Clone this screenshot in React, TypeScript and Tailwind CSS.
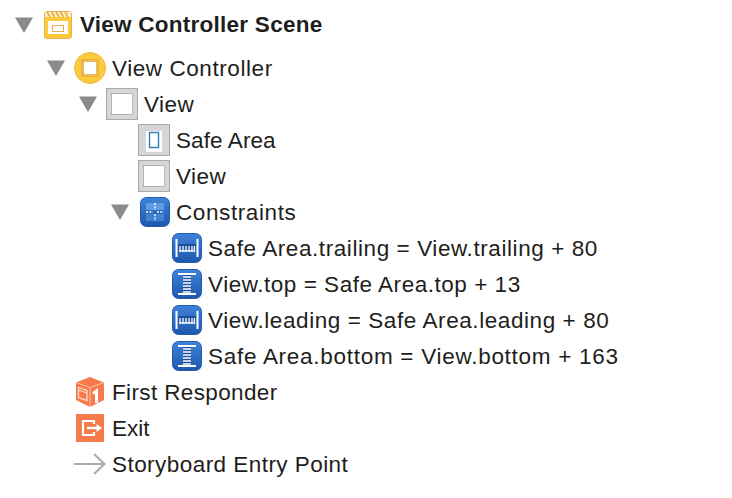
import React from "react";

const Tri = () => (
  <svg width="18" height="16" viewBox="0 0 18 16" className="-ml-px block">
    <path d="M0 0.5H18L9 16Z" fill="#8a8a8a" />
  </svg>
);

const SceneIcon = () => (
  <svg width="28" height="28" viewBox="0 0 28 28">
    <rect x="0.5" y="0.5" width="27" height="27" rx="2.5" fill="#fdca3c" stroke="#e8b04c" />
    <rect x="1" y="1" width="26" height="5" fill="#fdf0cc" />
    <path d="M3 1l3 5M7.500 1l3 5M12 1l3 5M16.500 1l3 5M21 1l3 5" stroke="#e8ad3c" strokeWidth="1.6" />
    <rect x="4" y="10" width="20" height="13" fill="#fff" />
    <rect x="8.500" y="14.500" width="11" height="6" fill="#fff" stroke="#e8b04c" />
  </svg>
);

const VCIcon = () => (
  <svg width="32" height="32" viewBox="0 0 32 32">
    <circle cx="16" cy="16" r="15.500" fill="#fdca3c" stroke="#f0b544" />
    <rect x="7.500" y="7.500" width="17" height="17" fill="#f7bd3c" stroke="#e9ae48" />
    <rect x="9.500" y="9.500" width="13" height="13" fill="#fff" stroke="#d8a040" strokeWidth="1" strokeDasharray="1.500 1" />
  </svg>
);

const ViewIcon = ({ safe }: { safe?: boolean }) => (
  <svg width="32" height="32" viewBox="0 0 32 32">
    <rect x="0.500" y="0.500" width="31" height="31" fill="#d6d6d6" stroke="#a9a9a9" />
    {safe ? (
      <>
        <rect x="8" y="7" width="16" height="21" fill="#fff" />
        <rect x="11.500" y="8.500" width="9" height="15" fill="#fff" stroke="#2f7fb8" strokeWidth="1.400" />
      </>
    ) : (
      <rect x="5.500" y="5.500" width="21" height="21" fill="#fff" stroke="#b4b4b4" />
    )}
  </svg>
);

const Blue = ({ children }: { children: React.ReactNode }) => (
  <svg width="30" height="30" viewBox="0 0 30 30">
    <defs>
      <linearGradient id="bl" x1="0" y1="0" x2="0" y2="1">
        <stop offset="0" stopColor="#3f83d8" />
        <stop offset="1" stopColor="#1d58ae" />
      </linearGradient>
    </defs>
    <rect x="0.500" y="0.500" width="29" height="29" rx="6" fill="url(#bl)" stroke="#1f5cb0" />
    {children}
  </svg>
);

const ConstraintsIcon = () => (
  <Blue>
    <rect x="6" y="6" width="18" height="7" fill="#5f9ae4" />
    <rect x="6" y="13" width="18" height="4" fill="#2a66bb" />
    <rect x="6" y="17" width="18" height="7" fill="#4581d2" />
    <path d="M15 6v7M15 17v7M6 15h7M17 15h7" stroke="#fff" strokeWidth="1.300" strokeDasharray="2 1.300" />
  </Blue>
);

const HIcon = () => (
  <Blue>
    <path d="M4.500 6v18M25.500 6v18" stroke="#fff" strokeWidth="2" />
    <rect x="6" y="11" width="18" height="7" fill="#1c4f9e" />
    <path d="M7 18h16" stroke="#fff" strokeWidth="1.500" />
    <path d="M8 13v5M11 13v5M14 13v5M17 13v5M20 13v5M22.500 13v5" stroke="#fff" strokeWidth="1.300" />
  </Blue>
);

const VIcon = () => (
  <Blue>
    <path d="M6 5h18M6 25h18" stroke="#fff" strokeWidth="2" />
    <rect x="11" y="6" width="8" height="18" fill="#1c4f9e" />
    <path d="M11 8h8M11 11h8M11 14h8M11 17h8M11 20h8M11 23h8" stroke="#fff" strokeWidth="1.500" />
  </Blue>
);

const CubeIcon = () => (
  <svg width="28" height="30" viewBox="0 0 28 30">
    <path d="M14 0L28 5.500V23L14 30L0 23V5.500Z" fill="#f77b4a" />
    <path d="M0 5.500L14 10.500L28 5.500" fill="none" stroke="#fbc3a8" strokeWidth="1" />
    <path d="M14 10.500V30" stroke="#fbc3a8" strokeWidth="1" />
    <path d="M2.500 10.500L11 13.500V23.500L2.500 20.500Z" fill="none" stroke="#fde0d2" strokeWidth="1.300" />
    <path d="M2.500 13L11 16" stroke="#fde0d2" strokeWidth="1" />
    <path d="M17 16.500L20.500 14V26" fill="none" stroke="#fff" strokeWidth="3" />
  </svg>
);

const ExitIcon = () => (
  <svg width="28" height="28" viewBox="0 0 28 28">
    <rect width="28" height="28" fill="#f77b4a" />
    <path d="M18 10V7H7V21H18V18" fill="none" stroke="#fff" strokeWidth="2.200" />
    <path d="M11 14H21" stroke="#fff" strokeWidth="2.400" />
    <path d="M20.500 10L26 14L20.500 18Z" fill="#fff" />
  </svg>
);

const ArrowIcon = () => (
  <svg width="32" height="22" viewBox="0 0 32 22">
    <path d="M0 11H31M20 1L30.500 11L20 21" fill="none" stroke="#ababab" strokeWidth="2" />
  </svg>
);

const Row = ({
  pad,
  open,
  icon,
  label,
  track = "tracking-[0.5px]",
}: {
  pad: string;
  open?: boolean;
  icon: React.ReactNode;
  label: string;
  track?: string;
}) => (
  <div className={`flex h-9 items-center ${pad}`}>
    <div className="w-[26px] shrink-0">{open && <Tri />}</div>
    <div className="flex w-8 shrink-0 items-center justify-end">{icon}</div>
    <span className={`ml-1.5 whitespace-nowrap pt-0.5 text-[22.5px] leading-none ${track}`}>{label}</span>
  </div>
);

export default function App() {
  return (
    <div className="h-[498px] w-[732px] overflow-hidden bg-white font-['Liberation_Sans',sans-serif] text-[#1e1e20]">
      <div className="flex h-[50px] items-center pl-4">
        <div className="w-[26px] shrink-0">
          <Tri />
        </div>
        <div className="flex w-8 shrink-0 items-center justify-center">
          <SceneIcon />
        </div>
        <span className="ml-1.5 whitespace-nowrap text-[22.5px] font-bold leading-none tracking-[0.25px]">View Controller Scene</span>
      </div>
      <Row pad="pl-12" open icon={<VCIcon />} label="View Controller" track="tracking-[0.57px]" />
      <Row pad="pl-20" open icon={<ViewIcon />} label="View" />
      <Row pad="pl-28" icon={<ViewIcon safe />} label="Safe Area" track="tracking-[0.1px]" />
      <Row pad="pl-28" icon={<ViewIcon />} label="View" />
      <Row pad="pl-28" open icon={<ConstraintsIcon />} label="Constraints" track="tracking-[0.6px]" />
      <Row pad="pl-36" icon={<HIcon />} label="Safe Area.trailing = View.trailing + 80" track="tracking-[0.58px]" />
      <Row pad="pl-36" icon={<VIcon />} label="View.top = Safe Area.top + 13" track="tracking-[0.53px]" />
      <Row pad="pl-36" icon={<HIcon />} label="View.leading = Safe Area.leading + 80" track="tracking-[0.58px]" />
      <Row pad="pl-36" icon={<VIcon />} label="Safe Area.bottom = View.bottom + 163" track="tracking-[0.72px]" />
      <Row pad="pl-12" icon={<div className="mr-0.5"><CubeIcon /></div>} label="First Responder" track="tracking-[0.37px]" />
      <Row pad="pl-12" icon={<div className="mr-0.5"><ExitIcon /></div>} label="Exit" track="tracking-[0px]" />
      <Row pad="pl-12" icon={<ArrowIcon />} label="Storyboard Entry Point" track="tracking-[0.45px]" />
    </div>
  );
}
